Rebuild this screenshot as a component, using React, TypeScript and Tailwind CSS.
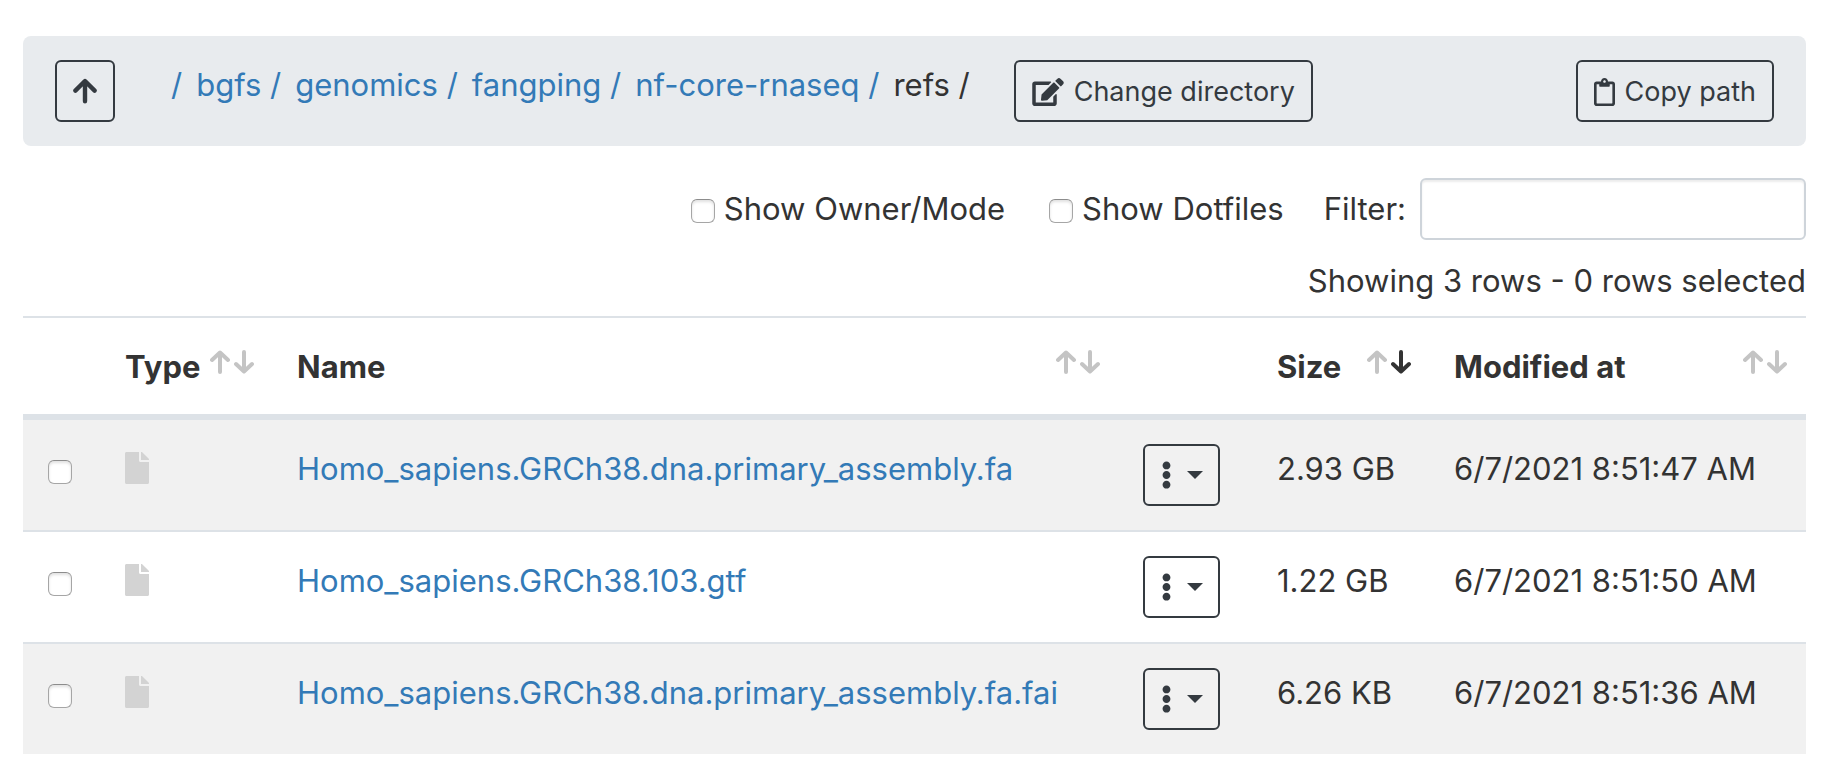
import { useState } from "react";
import { FaEdit, FaEllipsisV, FaFile, FaRegClipboard } from "react-icons/fa";

const crumbs = ["", "bgfs", "genomics", "fangping", "nf-core-rnaseq"];

const files = [
  { name: "Homo_sapiens.GRCh38.dna.primary_assembly.fa", size: "2.93 GB", modified: "6/7/2021 8:51:47 AM" },
  { name: "Homo_sapiens.GRCh38.103.gtf", size: "1.22 GB", modified: "6/7/2021 8:51:50 AM" },
  { name: "Homo_sapiens.GRCh38.dna.primary_assembly.fa.fai", size: "6.26 KB", modified: "6/7/2021 8:51:36 AM" },
];

const buttonClass =
  "flex h-[62px] items-center rounded-md border-2 border-[#343a40] text-[27px] text-[#343a40] whitespace-nowrap";

const checkboxClass =
  "size-6 shrink-0 appearance-none rounded-md border border-[#a6a6a6] border-t-[#8c8c8c] bg-white shadow-[inset_0_2px_3px_rgba(0,0,0,0.12)] checked:bg-[#337ab7]";

function Arrow({ down = false, className }: { down?: boolean; className: string }) {
  return (
    <svg viewBox="0 0 20 24" fill="none" stroke="currentColor" strokeWidth="4" strokeLinecap="round" strokeLinejoin="round" className={className} aria-hidden="true">
      {down ? <path d="M10 2v19M2 14l8 7.5 8-7.5" /> : <path d="M10 22V3M2 10l8-7.5 8 7.5" />}
    </svg>
  );
}

function UpIcon() {
  return (
    <svg viewBox="0 0 24 26" fill="none" stroke="currentColor" strokeWidth="4.4" strokeLinecap="round" strokeLinejoin="round" className="h-[26px] w-6" aria-hidden="true">
      <path d="M12 23.3V3.5M2.4 12.6L12 3l9.6 9.6" />
    </svg>
  );
}

function SortHeader({ label, active = false }: { label: string; active?: boolean }) {
  return (
    <th className="p-0 text-left font-bold">
      <button type="button" className="flex w-full items-start justify-between pt-6 pr-[19px] pb-[22px] pl-6 text-left whitespace-nowrap">
        <span>{label}</span>
        <span className="flex gap-1 pt-2 text-[#c4c4c4]">
          <Arrow className="h-6 w-5" />
          <Arrow down className={active ? "h-6 w-5 text-[#333]" : "h-6 w-5"} />
        </span>
      </button>
    </th>
  );
}

export default function App() {
  const [filter, setFilter] = useState("");
  return (
    <main className="bg-white pt-9 pr-5 pb-5 pl-[23px] font-[Inter,sans-serif] text-[31px] leading-[50px] text-[#333]">
      <nav aria-label="Path" className="flex items-start rounded-lg bg-[#e8ebee] px-8 py-6">
        <button type="button" aria-label="Parent directory" className={`${buttonClass} w-[60px] justify-center`}>
          <UpIcon />
        </button>
        <ol className="ml-[42px] flex whitespace-nowrap">
          {crumbs.map((c) => (
            <li key={c} className="pl-[14px]">
              <a href="#" className="text-[#337ab7]">{c ? `${c} /` : "/"}</a>
            </li>
          ))}
          <li className="pl-[14px]">refs /</li>
        </ol>
        <button type="button" className={`${buttonClass} ml-11 gap-[10px] px-4 pt-0.5`}>
          <FaEdit className="h-7 w-8" />
          Change directory
        </button>
        <button type="button" className={`${buttonClass} ml-auto gap-[10px] px-4 pt-0.5`}>
          <FaRegClipboard className="h-7 w-[21px]" />
          Copy path
        </button>
      </nav>

      <div className="mt-8 flex items-center justify-end">
        <label className="flex items-center gap-[9px]">
          <input type="checkbox" className={`${checkboxClass} mt-1`} />
          Show Owner/Mode
        </label>
        <label className="ml-11 flex items-center gap-[9px]">
          <input type="checkbox" className={`${checkboxClass} mt-1`} />
          Show Dotfiles
        </label>
        <label htmlFor="filter" className="ml-10">Filter:</label>
        <input
          id="filter"
          type="text"
          value={filter}
          onChange={(e) => setFilter(e.target.value)}
          className="ml-[14px] h-[62px] w-[386px] rounded-md border-2 border-[#ced4da] bg-white px-4 shadow-[inset_0_2px_2px_rgba(0,0,0,0.075)]"
        />
      </div>

      <p className="mt-4 mb-[10px] text-right">Showing 3 rows - 0 rows selected</p>

      <table className="w-full table-fixed border-separate border-spacing-0 border-t-2 border-[#dde2e7]">
        <colgroup>
          <col className="w-[78px]" />
          <col className="w-[172px]" />
          <col />
          <col className="w-[134px]" />
          <col className="w-[177px]" />
          <col className="w-[376px]" />
        </colgroup>
        <thead className="[&_th]:border-b-6 [&_th]:border-[#dde2e7]">
          <tr>
            <th aria-label="Select" />
            <SortHeader label="Type" />
            <SortHeader label="Name" />
            <th aria-label="Actions" />
            <SortHeader label="Size" active />
            <SortHeader label="Modified at" />
          </tr>
        </thead>
        <tbody>
          {files.map((f) => (
            <tr
              key={f.name}
              className="align-top whitespace-nowrap odd:bg-[#f1f1f1] [&:not(:last-child)>td]:border-b-2 [&>td]:border-[#dde2e7] [&>td]:py-6 [&>td]:pl-6 [&>td:first-child]:pl-[25px]"
            >
              <td>
                <input type="checkbox" aria-label={`Select ${f.name}`} className={`${checkboxClass} mt-4 block`} />
              </td>
              <td>
                <FaFile className="mt-2 h-8 w-6 text-[#d3d3d3]" role="img" aria-label="file" />
              </td>
              <td>
                <a href="#" className="text-[#337ab7]">{f.name}</a>
              </td>
              <td>
                <button type="button" aria-label={`Actions for ${f.name}`} className={`${buttonClass} w-[77px] justify-center gap-[15px]`}>
                  <FaEllipsisV className="h-7 w-[11px]" />
                  <span className="border-x-8 border-t-8 border-x-transparent border-t-[#343a40]" />
                </button>
              </td>
              <td>{f.size}</td>
              <td>{f.modified}</td>
            </tr>
          ))}
        </tbody>
      </table>
    </main>
  );
}
